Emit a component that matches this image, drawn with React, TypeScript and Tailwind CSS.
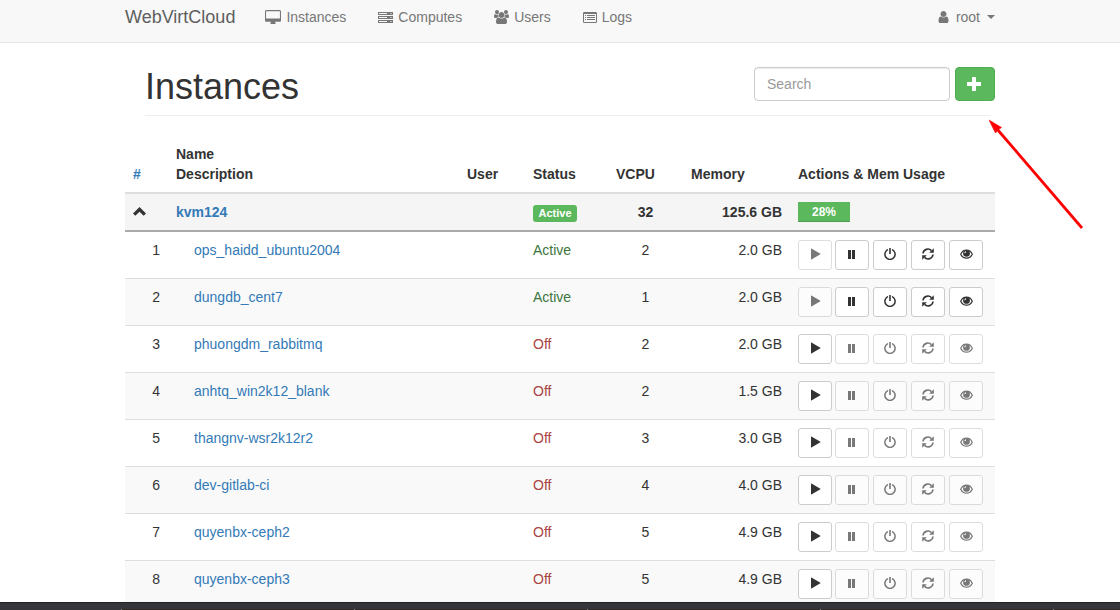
import type { ReactNode } from "react";

function Svg({ box, className, children }: { box: string; className: string; children: ReactNode }) {
  return (
    <svg viewBox={box} className={`${className} shrink-0`} fill="currentColor" aria-hidden="true">
      {children}
    </svg>
  );
}

const DesktopIcon = () => (
  <Svg box="0 0 1920 1664" className="h-[14px] w-[16px]">
    <path d="M1792 992v-832q0-13-9.5-22.5t-22.5-9.5h-1600q-13 0-22.5 9.5t-9.5 22.5v832q0 13 9.5 22.5t22.5 9.5h1600q13 0 22.5-9.5t9.5-22.5zm128-832v1088q0 66-47 113t-113 47h-544q0 37 16 77.5t32 71 16 43.5q0 26-19 45t-45 19h-512q-26 0-45-19t-19-45q0-14 16-44t32-70 16-78h-544q-66 0-113-47t-47-113v-1088q0-66 47-113t113-47h1600q66 0 113 47t47 113z" />
    <path d="M60 1090h1800v180h-1800z" />
  </Svg>
);

const ServerIcon = () => (
  <Svg box="0 0 15 11" className="h-[11px] w-[15px]">
    <path
      fillRule="evenodd"
      d="M0 0h15v3h-15zM1 1v1h8v-1zM12.500 1v1h1v-1zM0 4h15v3h-15zM1 5v1h8v-1zM12.500 5v1h1v-1zM0 8h15v3h-15zM1 9v1h8v-1zM12.500 9v1h1v-1z"
    />
  </Svg>
);

const UsersIcon = () => (
  <Svg box="0 0 1920 1792" className="h-[14px] w-[15px]">
    <path d="M593 896q-162 5-265 128h-134q-82 0-138-40.5t-56-118.5q0-353 124-353 6 0 43.5 21t97.5 42.5 119 21.5q67 0 133-23-5 37-5 66 0 139 81 256zm1071 637q0 120-73 189.5t-194 69.5h-874q-121 0-194-69.5t-73-189.5q0-53 3.5-103.5t14-109 26.5-108.5 43-97.5 62-81 85.5-53.5 111.5-20q10 0 43 21.5t73 48 107 48 135 21.5 135-21.5 107-48 73-48 43-21.5q61 0 111.5 20t85.5 53.5 62 81 43 97.5 26.5 108.5 14 109 3.5 103.5zm-1024-1277q0 106-75 181t-181 75-181-75-75-181 75-181 181-75 181 75 75 181zm704 384q0 159-112.5 271.5t-271.5 112.5-271.5-112.5-112.5-271.5 112.5-271.5 271.5-112.5 271.5 112.5 112.5 271.5zm576 225q0 78-56 118.5t-138 40.5h-134q-103-123-265-128 81-117 81-256 0-29-5-66 66 23 133 23 59 0 119-21.5t97.5-42.5 43.5-21q124 0 124 353zm-128-609q0 106-75 181t-181 75-181-75-75-181 75-181 181-75 181 75 75 181z" />
  </Svg>
);

const LogsIcon = () => (
  <Svg box="0 0 14 11" className="h-[11px] w-[14px]">
    <path
      fillRule="evenodd"
      d="M1.200 0h11.600q1.200 0 1.200 1.200v8.600q0 1.200-1.200 1.200h-11.600q-1.200 0-1.200-1.200v-8.600q0-1.200 1.200-1.200zM1 2v7.700q0 .3.300.3h11.400q.3 0 .3-.3v-7.700z"
    />
    <path d="M2 3h1v1h-1zM4 3h8v1h-8zM2 5h1v1h-1zM4 5h8v1h-8zM2 7h1v1h-1zM4 7h8v1h-8z" />
  </Svg>
);

const UserIcon = () => (
  <Svg box="256 128 1280 1536" className="h-[12px] w-[11px]">
    <path d="M1536 1399q0 109-62.5 187t-150.5 78h-854q-88 0-150.5-78t-62.5-187q0-85 8.5-160.5t31.5-152 58.5-131 94-89 134.5-34.5q131 128 313 128t313-128q76 0 134.5 34.5t94 89 58.5 131 31.5 152 8.5 160.5zm-256-887q0 159-112.5 271.5t-271.5 112.5-271.5-112.5-112.5-271.5 112.5-271.5 271.5-112.5 271.5 112.5 112.5 271.5z" />
  </Svg>
);

const PlusIcon = () => (
  <Svg box="0 0 14 14" className="size-[14px]">
    <path d="M5.500 0h3q.5 0 .5.5v4.500h4.500q.5 0 .5.5v3q0 .5-.5.5h-4.500v4.500q0 .5-.5.5h-3q-.5 0-.5-.5v-4.500h-4.500q-.5 0-.5-.5v-3q0-.5.5-.5h4.500v-4.500q0-.5.5-.5z" />
  </Svg>
);

const ChevronUpIcon = () => (
  <Svg box="0 0 13 9" className="h-[9px] w-[13px]">
    <path d="M6.500.1 13 6.400 10.700 8.700 6.500 4.800 2.300 8.700 0 6.400z" />
  </Svg>
);

const PlayIcon = () => (
  <Svg box="0 0 12 12" className="size-3">
    <path d="M2 .8v10.400q0 .4.400.2l9-5.200q.3-.2 0-.4l-9-5.200q-.4-.2-.4.200z" />
  </Svg>
);

const PauseIcon = () => (
  <Svg box="0 0 12 12" className="size-3">
    <path d="M2 2h3v9h-3zM6 2h3v9h-3z" />
  </Svg>
);

const PowerIcon = () => (
  <Svg box="0 0 12 12" className="size-3">
    <path
      d="M3.400 1.900A5.100 5.100 0 1 0 8.600 1.900"
      fill="none"
      stroke="currentColor"
      strokeWidth="1.500"
      strokeLinecap="round"
    />
    <path d="M5.200 0h1.600v6h-1.600z" />
  </Svg>
);

const RefreshIcon = () => (
  <Svg box="0 0 12 12" className="size-3">
    <path
      d="M1 5.500A4.900 4.900 0 0 1 9.400 2.600M11 6.500A4.900 4.900 0 0 1 2.600 9.400"
      fill="none"
      stroke="currentColor"
      strokeWidth="1.600"
    />
    <path d="M11.800.2v4.500h-4.600zM.2 11.800v-4.500h4.600z" />
  </Svg>
);

const EyeIcon = () => (
  <Svg box="0 0 13 12" className="h-3 w-[13px]">
    <path
      d="M.7 6.200C1.900 3.700 4 2.200 6.500 2.200S11.100 3.700 12.300 6.200C11.100 8.700 9 10.200 6.500 10.200S1.900 8.700.7 6.200z"
      fill="none"
      stroke="currentColor"
      strokeWidth="1.200"
    />
    <path fillRule="evenodd" d="M6.500 2A3.400 3.400 0 1 1 6.500 8.800 3.400 3.400 0 1 1 6.500 2zM5.900 3.300C4.900 3.500 4.300 4.200 4.500 5.200L5.500 5.100C5.400 4.500 5.700 4.300 6.200 4.200z" />
  </Svg>
);

const links = [
  { label: "Instances", icon: <DesktopIcon /> },
  { label: "Computes", icon: <ServerIcon /> },
  { label: "Users", icon: <UsersIcon /> },
  { label: "Logs", icon: <LogsIcon /> },
];

const instances = [
  { name: "ops_haidd_ubuntu2004", active: true, vcpu: 2, memory: "2.0 GB" },
  { name: "dungdb_cent7", active: true, vcpu: 1, memory: "2.0 GB" },
  { name: "phuongdm_rabbitmq", active: false, vcpu: 2, memory: "2.0 GB" },
  { name: "anhtq_win2k12_blank", active: false, vcpu: 2, memory: "1.5 GB" },
  { name: "thangnv-wsr2k12r2", active: false, vcpu: 3, memory: "3.0 GB" },
  { name: "dev-gitlab-ci", active: false, vcpu: 4, memory: "4.0 GB" },
  { name: "quyenbx-ceph2", active: false, vcpu: 5, memory: "4.9 GB" },
  { name: "quyenbx-ceph3", active: false, vcpu: 5, memory: "4.9 GB" },
];

function ActionButton({ label, disabled, children }: { label: string; disabled: boolean; children: ReactNode }) {
  return (
    <button
      type="button"
      aria-label={label}
      disabled={disabled}
      className="flex h-[30px] w-[34px] items-center justify-center rounded-[3px] border border-[#ccc] bg-white pb-[2px] text-[#333] disabled:opacity-65"
    >
      {children}
    </button>
  );
}

function Navbar() {
  return (
    <nav className="h-[43px] shrink-0 border-b border-[#e7e7e7] bg-[#f8f8f8] text-[#777]">
      <div className="mx-auto flex w-full max-w-[870px] items-center pt-[7px] leading-5">
        <a href="#" className="mr-[30px] text-lg leading-5 text-[#5e5e5e]">
          WebVirtCloud
        </a>
        <div className="flex gap-8">
          {links.map((link) => (
            <a key={link.label} href="#" className="flex items-center gap-[5px]">
              {link.icon}
              {link.label}
            </a>
          ))}
        </div>
        <button type="button" className="ml-auto flex items-center gap-[7px]">
          <UserIcon />
          <span>root</span>
          <svg viewBox="0 0 8 4" className="h-1 w-2" fill="currentColor" aria-hidden="true">
            <path d="M0 0h8l-4 4z" />
          </svg>
        </button>
      </div>
    </nav>
  );
}

export default function App() {
  return (
    <div className="flex h-screen flex-col overflow-hidden bg-white font-['Liberation_Sans',Arial,sans-serif] text-sm leading-5 text-[#333]">
      <Navbar />
      <main className="min-h-0 flex-1 overflow-hidden pt-6">
        <div className="relative mx-auto w-full max-w-[870px]">
          <header className="ml-5 flex items-start justify-between">
            <h1 className="text-4xl leading-10">Instances</h1>
            <form className="flex gap-[5px]">
              <input
                type="text"
                aria-label="Search"
                placeholder="Search"
                className="h-[34px] w-[196px] rounded-[4px] border border-[#ccc] bg-white px-3 shadow-[inset_0_1px_1px_rgba(0,0,0,0.075)] placeholder:text-[#999]"
              />
              <button
                type="button"
                aria-label="New instance"
                className="flex h-[34px] w-10 items-center justify-center rounded-[4px] border border-[#4cae4c] bg-[#5cb85c] pr-[2px] text-white"
              >
                <PlusIcon />
              </button>
            </form>
          </header>
          <hr className="mt-2 mr-[5px] mb-5 ml-5 border-[#eee]" />

          <svg
            viewBox="0 0 96 110"
            className="absolute top-[52px] left-full -ml-[6px] h-[110px] w-[96px]"
            aria-hidden="true"
          >
            <path d="M8 10 93 109" stroke="#f00" strokeWidth="2.800" />
            <path d="M0 1 12.500 8.500 9.500 10.500 6.500 14z" fill="#f00" stroke="#f00" strokeWidth=".6" />
          </svg>

          <table className="w-full table-fixed border-separate border-spacing-0 text-left">
            <colgroup>
              <col className="w-[43px]" />
              <col />
              <col className="w-[66px]" />
              <col className="w-[83px]" />
              <col className="w-[75px]" />
              <col className="w-[107px]" />
              <col className="w-[205px]" />
            </colgroup>
            <thead>
              <tr className="align-bottom [&>th]:border-b-2 [&>th]:border-[#ddd] [&>th]:p-2">
                <th>
                  <a href="#" className="text-[#337ab7]">#</a>
                </th>
                <th>
                  Name
                  <br />
                  Description
                </th>
                <th>User</th>
                <th>Status</th>
                <th>VCPU</th>
                <th>Memory</th>
                <th>Actions &amp; Mem Usage</th>
              </tr>
            </thead>
            <tbody className="align-top">
              <tr className="bg-[#f5f5f5] font-bold [&>td]:border-b-2 [&>td]:border-[#aaa] [&>td]:px-2 [&>td]:py-2">
                <td>
                  <button type="button" aria-label="Collapse kvm124" className="flex h-5 items-center pb-[2px]">
                    <ChevronUpIcon />
                  </button>
                </td>
                <td>
                  <a href="#" className="text-[#337ab7]">kvm124</a>
                </td>
                <td />
                <td>
                  <div className="flex h-5 items-end">
                    <span className="h-[17px] w-11 rounded-[3px] bg-[#5cb85c] text-center text-[11px] leading-[17px] text-white">
                      Active
                    </span>
                  </div>
                </td>
                <td className="text-center">32</td>
                <td className="text-right">125.6 GB</td>
                <td>
                  <div className="h-5 w-[52px] bg-[#5cb85c] text-center text-xs leading-5 text-white shadow-[inset_0_-1px_0_rgba(0,0,0,0.15)]">
                    28%
                  </div>
                </td>
              </tr>
              {instances.map((vm, i) => (
                <tr
                  key={vm.name}
                  className="even:bg-white odd:bg-[#f9f9f9] [&>td]:border-t [&>td]:border-[#ddd] [&>td]:p-2 nth-2:[&>td]:border-t-0"
                >
                  <td className="text-right">{i + 1}</td>
                  <td>
                    <a href="#" className="ml-[18px] text-[#337ab7]">{vm.name}</a>
                  </td>
                  <td />
                  <td className={vm.active ? "text-[#3c763d]" : "text-[#a94442]"}>{vm.active ? "Active" : "Off"}</td>
                  <td className="text-center">{vm.vcpu}</td>
                  <td className="text-right">{vm.memory}</td>
                  <td>
                    <div className="flex gap-[3px]">
                      <ActionButton label="Power on" disabled={vm.active}>
                        <PlayIcon />
                      </ActionButton>
                      <div className="flex gap-1">
                        <ActionButton label="Suspend" disabled={!vm.active}>
                          <PauseIcon />
                        </ActionButton>
                        <ActionButton label="Power off" disabled={!vm.active}>
                          <PowerIcon />
                        </ActionButton>
                        <ActionButton label="Power cycle" disabled={!vm.active}>
                          <RefreshIcon />
                        </ActionButton>
                        <ActionButton label="Console" disabled={!vm.active}>
                          <EyeIcon />
                        </ActionButton>
                      </div>
                    </div>
                  </td>
                </tr>
              ))}
            </tbody>
          </table>
        </div>
      </main>
      <footer className="flex h-2 shrink-0 items-end overflow-hidden border-t border-[#222326] bg-[#35363a] pl-[121px]">
        {[0, 1, 2, 3, 4].map((n) => (
          <div key={n} className="h-px w-[233px] shrink-0 border-l border-[#8a8b8e] bg-[#2d2a28]" />
        ))}
      </footer>
    </div>
  );
}
